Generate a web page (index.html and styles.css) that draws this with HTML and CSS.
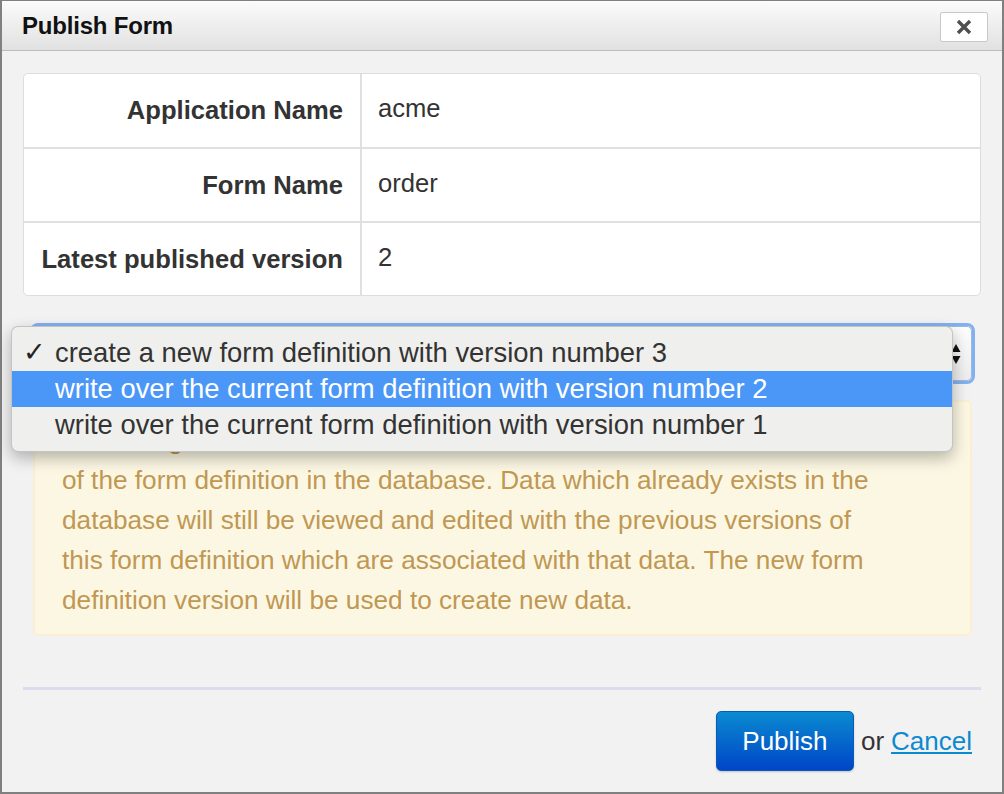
FILE: index.html
```html
<!DOCTYPE html>
<html>
<head>
<meta charset="utf-8">
<link rel="stylesheet" href="styles.css">
</head>
<body>
<div class="dialog">
  <div class="header">
    <div class="title">Publish Form</div>
    <button class="close" aria-label="Close">
      <svg width="18" height="16" viewBox="0 0 18 16"><path d="M3 2 L15 14 M15 2 L3 14" stroke="#4f4f4f" stroke-width="3.4" stroke-linecap="butt"/></svg>
    </button>
  </div>
  <div class="body">
    <div class="info">
      <div class="row"><div class="label">Application Name</div><div class="value">acme</div></div>
      <div class="row"><div class="label">Form Name</div><div class="value">order</div></div>
      <div class="row"><div class="label">Latest published version</div><div class="value">2</div></div>
    </div>
    <div class="form">
      <div class="select">
        <span class="select-text">create a new form definition with version number 3</span>
        <span class="arrows">
          <svg width="10" height="22" viewBox="0 0 10 22"><path d="M5 1 L9.5 9 H0.5 Z M5 21 L9.5 13 H0.5 Z" fill="#111"/></svg>
        </span>
      </div>
      <div class="warning">
        Publishing will create a new version and store it as a new version<br>
        of the form definition in the database. Data which already exists in the<br>
        database will still be viewed and edited with the previous versions of<br>
        this form definition which are associated with that data. The new form<br>
        definition version will be used to create new data.
      </div>
      <div class="menu">
        <div class="opt"><span class="check">✓</span>create a new form definition with version number 3</div>
        <div class="opt hl">write over the current form definition with version number 2</div>
        <div class="opt">write over the current form definition with version number 1</div>
      </div>
    </div>
    <div class="sep"></div>
    <div class="actions">
      <button class="publish">Publish</button>
      <span class="or">or</span>
      <a class="cancel" href="#">Cancel</a>
    </div>
  </div>
</div>
</body>
</html>
```

FILE: styles.css
```css
* { box-sizing: border-box; }
html, body { margin: 0; padding: 0; }
body {
  font-family: "Liberation Sans", Arial, sans-serif;
  color: #333;
  background: #f2f2f2;
}
.dialog {
  width: 1004px;
  height: 794px;
  border: 2px solid #808080;
  border-top-width: 1px;
  background: #f2f2f2;
  display: flex;
  flex-direction: column;
}
.header {
  height: 50px;
  display: flex;
  align-items: center;
  justify-content: space-between;
  padding: 0 14px 0 20px;
  background: linear-gradient(#fbfbfb, #e1e1e1);
  border-bottom: 1px solid #bcbcbc;
}
.title {
  font-size: 24px;
  font-weight: bold;
  color: #111;
  letter-spacing: -0.2px;
}
.close {
  width: 48px;
  height: 30px;
  margin-top: 2px;
  background: #fff;
  border: 1px solid #c8c8c8;
  border-radius: 2px;
  display: flex;
  align-items: center;
  justify-content: center;
  padding: 0;
}
.body {
  flex: 1;
  padding: 22px 21px 0 21px;
  display: flex;
  flex-direction: column;
}
.info {
  background: #fff;
  border: 1px solid #dddddd;
  border-radius: 5px;
}
.row {
  display: flex;
  height: 74px;
  border-top: 2px solid #e0e0e0;
}
.row:first-child { border-top: none; height: 73px; }
.label {
  width: 338px;
  border-right: 2px solid #e0e0e0;
  text-align: right;
  font-weight: bold;
  font-size: 25.6px;
  padding-right: 17px;
  display: flex;
  align-items: center;
  justify-content: flex-end;
  color: #333;
}
.value {
  padding-left: 16px;
  font-size: 25.6px;
  display: flex;
  align-items: center;
  padding-bottom: 4px;
  color: #333;
}
.form {
  position: relative;
  padding: 30px 9px 0 10px;
}
.select {
  height: 55px;
  background: linear-gradient(#fdfdfd, #ececec);
  border: 1px solid #9fb9de;
  border-radius: 5px;
  box-shadow: 0 0 0 3px rgba(92, 155, 238, 0.75);
  display: flex;
  align-items: center;
  justify-content: space-between;
  padding: 0 10px 0 20px;
  font-size: 22px;
}
.arrows { display: flex; align-items: center; }
.warning {
  margin-top: 19px;
  background: #fcf7e3;
  border: 2px solid #faefd5;
  border-radius: 5px;
  color: #c09853;
  font-size: 26.2px;
  line-height: 40px;
  padding: 18px 10px 14px 27px;
  white-space: nowrap;
}
.menu {
  position: absolute;
  left: -12px;
  top: 30px;
  width: 942px;
  height: 126px;
  background: #efefed;
  border: 1px solid rgba(0,0,0,0.18);
  border-radius: 7px;
  box-shadow: 0 6px 16px rgba(0,0,0,0.28);
  padding-top: 8px;
  font-size: 27.4px;
  color: #333;
}
.opt {
  height: 36px;
  line-height: 36px;
  padding-left: 43px;
  position: relative;
  white-space: nowrap;
}
.opt.hl {
  background: #4a97f8;
  color: #fff;
}
.check {
  position: absolute;
  left: 11px;
  top: -1px;
  font-family: "DejaVu Sans", sans-serif;
  font-size: 27px;
  color: #222;
}
.sep {
  margin-top: 51px;
  height: 3px;
  background: #dddcec;
}
.actions {
  display: flex;
  align-items: center;
  justify-content: flex-end;
  margin-top: 21px;
  padding-right: 9px;
  font-size: 26px;
}
.publish {
  width: 138px;
  height: 60px;
  border: 1px solid #0a5bb5;
  border-radius: 5px;
  background: linear-gradient(#0a8bd0, #0045c8);
  color: #fff;
  font-family: "Liberation Sans", Arial, sans-serif;
  font-size: 26px;
  box-shadow: 0 1px 2px rgba(0,0,0,0.2);
  padding: 0;
}
.or {
  margin-left: 7px;
  color: #333;
}
.cancel {
  margin-left: 7px;
  color: #0c8ad0;
  text-decoration: underline;
}
```
